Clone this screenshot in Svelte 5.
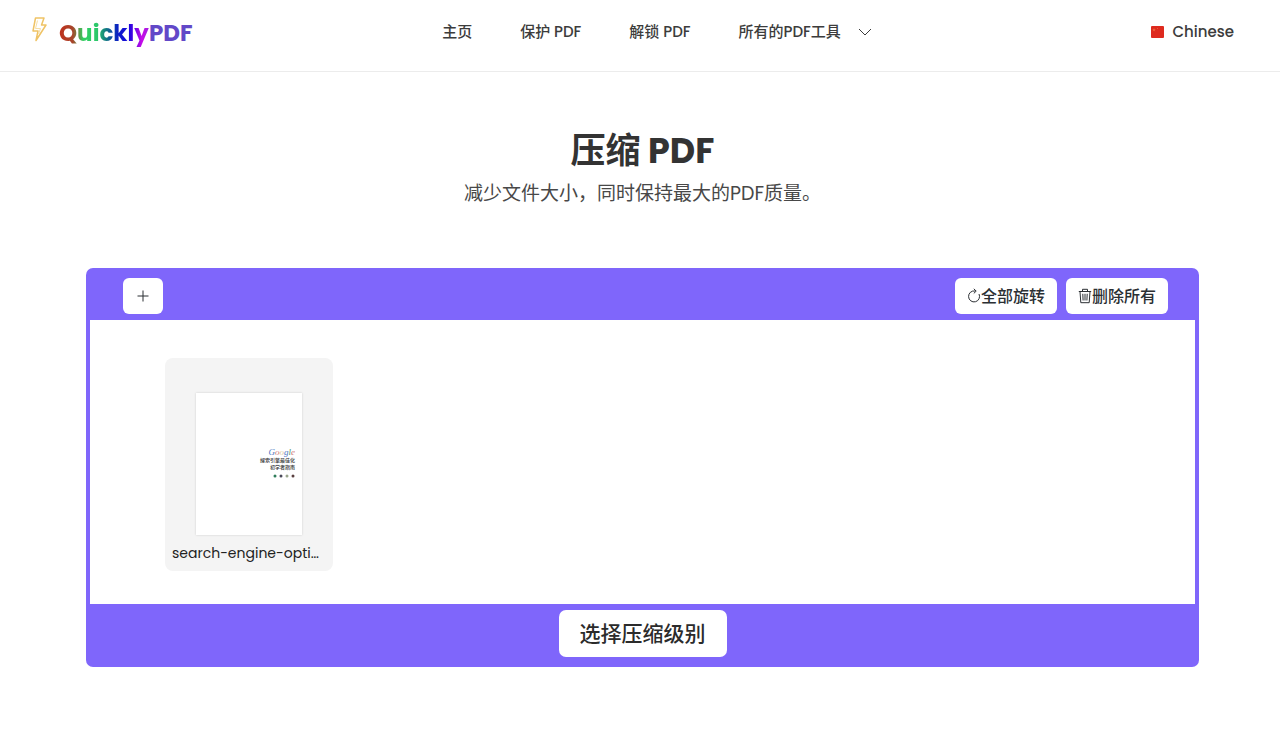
<script>
  let links = [
    { label: '主页', href: '#home' },
    { label: '保护 PDF', href: '#protect' },
    { label: '解锁 PDF', href: '#unlock' },
  ];

  let files = [{ name: 'search-engine-opti…' }];

  const dots = ['#2f7d5b', '#4a4a5a', '#9aa58c', '#5a4040'];
</script>

<header>
  <a class="logo" href="#home">
    <svg class="bolt" viewBox="0 0 18 28" width="18" height="28" aria-hidden="true">
      <path d="M5.5 2 L14 2 L11.5 9 L16 9 L6 24.5 L8 15 L3 15 Z" />
      <path class="inner" d="M7.5 4.5 L5.5 12.5 L10.5 12.5 L8.5 18" />
    </svg>
    <span class="brand"><span class="quickly">Quickly</span><span class="pdf">PDF</span></span>
  </a>

  <nav>
    {#each links as link}
      <a href={link.href}>{link.label}</a>
    {/each}
    <button class="tools" type="button">
      所有的PDF工具
      <svg viewBox="0 0 14 8" width="14" height="8" aria-hidden="true">
        <path d="M1 1 L7 7 L13 1" />
      </svg>
    </button>
  </nav>

  <button class="language" type="button">
    <svg viewBox="0 0 13 12" width="13" height="12" aria-hidden="true">
      <rect width="13" height="12" rx="1" fill="#de2a1e" />
      <path d="M3 2 L3.5 3.3 L4.8 3.3 L3.8 4.1 L4.2 5.4 L3 4.6 L1.8 5.4 L2.2 4.1 L1.2 3.3 L2.5 3.3 Z" fill="#ee6a3c" />
      <circle cx="6.5" cy="2.4" r="0.5" fill="#ee6a3c" />
    </svg>
    Chinese
  </button>
</header>

<main>
  <div class="intro">
    <h1>压缩 PDF</h1>
    <p>减少文件大小，同时保持最大的PDF质量。</p>
  </div>

  <section class="panel">
    <div class="toolbar">
      <button class="add" type="button" aria-label="添加文件">
        <svg viewBox="0 0 16 16" width="16" height="16" aria-hidden="true">
          <path d="M8 2.5 V13.5 M2.5 8 H13.5" />
        </svg>
      </button>
      <div class="actions">
        <button type="button">
          <svg viewBox="0 0 14 16" width="14" height="16" aria-hidden="true">
            <path d="M12 6 A5.5 5.5 0 1 1 8 3" />
            <path d="M6.8 0.8 L9.2 3.1 L6.8 5.4" />
          </svg>全部旋转
        </button>
        <button type="button">
          <svg viewBox="0 0 14 16" width="14" height="16" aria-hidden="true">
            <path d="M0.8 3.5 H13.2 M4.5 3.2 V1.3 H9.5 V3.2 M2 3.5 L2.8 14.7 H11.2 L12 3.5 M4.8 5.8 L5.1 12.5 M7 5.8 V12.5 M9.2 5.8 L8.9 12.5" />
          </svg>删除所有
        </button>
      </div>
    </div>

    <div class="files">
      {#each files as file}
        <div class="file">
          <div class="page">
            <div class="cover">
              <span class="google"><i class="b">G</i><i class="r">o</i><i class="y">o</i><i class="b">g</i><i class="g">l</i><i class="r">e</i></span>
              <span>搜索引擎最佳化</span>
              <span>初学者指南</span>
              <svg viewBox="0 0 22 4" width="22" height="4" aria-hidden="true">
                {#each dots as fill, i}
                  <circle cx={2 + i * 6} cy="2" r="1.5" {fill} />
                {/each}
              </svg>
            </div>
          </div>
          <p class="name">{file.name}</p>
        </div>
      {/each}
    </div>

    <div class="footer">
      <button type="button">选择压缩级别</button>
    </div>
  </section>
</main>

<style>
  :global(body) {
    background: #fff;
    color: #333;
    font-family: Poppins, Inter, "Noto Sans CJK SC", sans-serif;
  }

  button {
    padding: 0;
    border: none;
    background: none;
    color: inherit;
    font: inherit;
    cursor: pointer;
  }

  a {
    color: inherit;
    text-decoration: none;
  }

  svg {
    flex: none;
    fill: none;
    stroke: currentColor;
  }

  header {
    display: flex;
    justify-content: space-between;
    align-items: flex-start;
    height: 72px;
    padding: 0 46px 0 30px;
    box-sizing: border-box;
    border-bottom: 1px solid #ececec;
    font-size: 15px;
    font-weight: 500;
    line-height: 24px;
    color: #3c3c3c;
  }

  .logo {
    display: flex;
    gap: 11px;
    padding-top: 16px;
  }

  .bolt {
    stroke: #efc365;
    stroke-width: 1.5;
    stroke-linejoin: round;
  }

  .bolt .inner {
    stroke: #f7dfa6;
    stroke-width: 1;
  }

  .brand {
    font-size: 23px;
    font-weight: 700;
    line-height: 34px;
  }

  .quickly {
    background: linear-gradient(90deg, #c0301c 0%, #a8442a 15%, #2fd060 27%, #2cc96a 42%, #117a80 52%, #0b1cc8 66%, #1a06e0 78%, #c80be8 92%, #a020e0 100%);
    -webkit-background-clip: text;
    background-clip: text;
    color: transparent;
  }

  .pdf {
    color: #6248c8;
  }

  nav {
    display: flex;
    gap: 48px;
    padding-top: 20px;
  }

  .tools {
    display: flex;
    align-items: center;
    gap: 17px;
  }

  .language {
    display: flex;
    align-items: center;
    gap: 8px;
    padding: 20px 0 0 30px;
  }

  .language svg {
    stroke: none;
  }

  main {
    padding: 55px 81px 71px 86px;
  }

  .intro {
    text-align: center;
  }

  h1 {
    margin: 0;
    font-size: 35px;
    font-weight: 700;
    line-height: 48px;
  }

  .intro p {
    margin: 5px 0 0;
    color: #484848;
    font-size: 19px;
    line-height: 28px;
  }

  .panel {
    margin-top: 60px;
    padding: 0 4px;
    border-radius: 7px;
    background: #7f66fb;
  }

  .toolbar {
    display: flex;
    justify-content: space-between;
    align-items: center;
    height: 52px;
    padding: 4px 27px 0 33px;
    box-sizing: border-box;
  }

  .toolbar button {
    display: flex;
    justify-content: center;
    align-items: center;
    height: 36px;
    padding: 0 12px;
    border-radius: 6px;
    background: #fff;
    color: #2b2f33;
    font-size: 16px;
    font-weight: 500;
  }

  .actions {
    display: flex;
    gap: 9px;
  }

  .files {
    display: flex;
    flex-wrap: wrap;
    gap: 32px;
    min-height: 284px;
    padding: 38px 75px 33px;
    box-sizing: border-box;
    background: #fff;
  }

  .file {
    width: 168px;
    padding: 35px 7px 6px;
    box-sizing: border-box;
    border-radius: 8px;
    background: #f4f4f4;
  }

  .page {
    display: flex;
    justify-content: flex-end;
    width: 106px;
    height: 142px;
    margin: 0 auto;
    padding: 54px 7px 0;
    box-sizing: border-box;
    background: #fff;
    box-shadow: 0 0 2px #ccc;
  }

  .cover {
    display: flex;
    flex-direction: column;
    align-items: flex-end;
    color: #333;
    font-size: 5px;
    font-weight: 500;
    line-height: 7px;
    white-space: nowrap;
  }

  .cover svg {
    margin-top: 3px;
    stroke: none;
  }

  .google {
    font-family: "Liberation Serif", serif;
    font-size: 9px;
    font-weight: 400;
    line-height: 10px;
  }

  .b {
    color: #4a78c4;
  }

  .r {
    color: #d07878;
  }

  .y {
    color: #e0cf9a;
  }

  .g {
    color: #4f9a78;
  }

  .name {
    margin: 6px 0 0;
    overflow: hidden;
    color: #222;
    font-size: 14px;
    line-height: 24px;
    text-overflow: ellipsis;
    white-space: nowrap;
  }

  .footer {
    display: flex;
    justify-content: center;
    padding: 6px 0 10px;
  }

  .footer button {
    height: 47px;
    padding: 0 21px;
    border-radius: 7px;
    background: #fff;
    color: #2b2b2b;
    font-size: 21px;
    font-weight: 500;
    line-height: 28px;
  }
</style>
